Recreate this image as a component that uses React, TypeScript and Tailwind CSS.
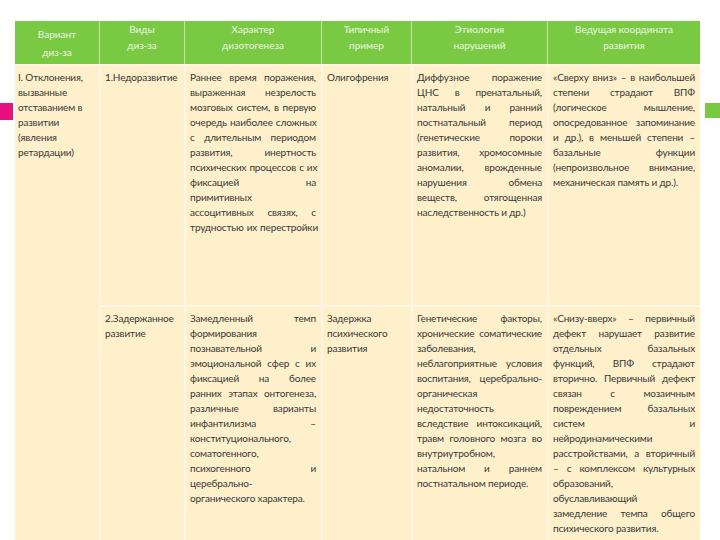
import React from 'react';

type Cell = { lines: string[]; left?: boolean };

// "<" at the start of a line = left aligned (last line of a justified paragraph)
const row1: Cell[] = [
  { lines: ['1.Недоразвитие'], left: true },
  {
    lines: [
      'Раннее время поражения,',
      'выраженная незрелость',
      'мозговых систем, в первую',
      'очередь наиболее сложных',
      'с длительным периодом',
      'развития, инертность',
      'психических процессов с их',
      'фиксацией на',
      'примитивных',
      'ассоцитивных связях, с',
      'трудностью их перестройки',
    ],
  },
  { lines: ['Олигофрения'], left: true },
  {
    lines: [
      'Диффузное поражение',
      'ЦНС в пренатальный,',
      'натальный и ранний',
      'постнатальный период',
      '(генетические пороки',
      'развития, хромосомные',
      'аномалии, врожденные',
      'нарушения обмена',
      'веществ, отягощенная',
      '<наследственность и др.)',
    ],
  },
  {
    lines: [
      '«Сверху вниз» – в наибольшей',
      'степени страдают ВПФ',
      '(логическое мышление,',
      'опосредованное запоминание',
      'и др.), в меньшей степени –',
      'базальные функции',
      '(непроизвольное внимание,',
      '<механическая память и др.).',
    ],
  },
];

const row2: Cell[] = [
  { lines: ['2.Задержанное', 'развитие'], left: true },
  {
    lines: [
      'Замедленный темп',
      'формирования',
      'познавательной и',
      'эмоциональной сфер с их',
      'фиксацией на более',
      'ранних этапах онтогенеза,',
      'различные варианты',
      'инфантилизма –',
      'конституционального,',
      'соматогенного,',
      'психогенного и',
      'церебрально-',
      '<органического характера.',
    ],
  },
  { lines: ['Задержка', 'психического', 'развития'], left: true },
  {
    lines: [
      'Генетические факторы,',
      'хронические соматические',
      'заболевания,',
      'неблагоприятные условия',
      'воспитания, церебрально-',
      'органическая',
      'недостаточность',
      'вследствие интоксикаций,',
      'травм головного мозга во',
      'внутриутробном,',
      'натальном и раннем',
      '<постнатальном периоде.',
    ],
  },
  {
    lines: [
      '«Снизу-вверх» – первичный',
      'дефект нарушает развитие',
      'отдельных базальных',
      'функций, ВПФ страдают',
      'вторично. Первичный дефект',
      'связан с мозаичным',
      'повреждением базальных',
      'систем и',
      'нейродинамическими',
      'расстройствами, а вторичный',
      '– с комплексом культурных',
      'образований,',
      'обуславливающий',
      'замедление темпа общего',
      '<психического развития.',
    ],
  },
];

const headers = [
  ['Виды', 'диз-за'],
  ['Характер', 'дизотогенеза'],
  ['Типичный', 'пример'],
  ['Этиология', 'нарушений'],
  ['Ведущая координата', 'развития'],
];

function Line({ t, left }: { t: string; left?: boolean }) {
  if (left || t.startsWith('<')) {
    return <div className="whitespace-nowrap">{t.replace(/^</, '')}</div>;
  }
  const words = t.split(' ');
  return (
    <div className="flex justify-between gap-[3px] whitespace-nowrap">
      {words.map((w, i) => (
        <span key={i}>{w}</span>
      ))}
    </div>
  );
}

function BodyCell({ cell }: { cell: Cell }) {
  return (
    <div className="border-l-2 border-t-2 border-[#fff7e4] pl-[4px] pr-[5px] pt-1">
      {cell.lines.map((l, i) => (
        <Line key={i} t={l} left={cell.left} />
      ))}
    </div>
  );
}

export default function App() {
  return (
    <div
      className="relative h-[540px] w-[720px] overflow-hidden bg-white text-[10px] leading-[15px] tracking-[-0.15px] text-[#383838]"
      style={{ fontFamily: 'Lato, "Liberation Sans", sans-serif' }}
    >
      {/* slide decorations */}
      <div className="absolute left-0 top-[103px] h-[17px] w-[13px] bg-[#e5127e]" />
      <div className="absolute right-0 top-[103px] h-[15px] w-[15px] bg-[#7ac943]" />

      <div className="ml-[15px] mt-[21px] w-[685px]">
        <div className="grid h-[43px] grid-cols-[84px_85px_137px_90px_136px_153px] bg-[#7ac943] text-center tracking-normal text-[#eef7e6]">
          <div className="pt-1 leading-[18px]">
            <div>Вариант</div>
            <div>диз-за</div>
          </div>
          {headers.map((h, i) => (
            <div key={i} className="border-l border-[#c3e4a4] leading-[16px]">
              <div>{h[0]}</div>
              <div>{h[1]}</div>
            </div>
          ))}
        </div>

        <div className="grid grid-cols-[84px_85px_137px_90px_136px_153px] grid-rows-[241px_260px] bg-[#fdf0cb]">
          <div className="row-span-2 border-t-2 border-[#fff7e4] pl-[3px] pt-1">
            {['I. Отклонения,', 'вызванные', 'отставанием в', 'развитии', '(явления', 'ретардации)'].map((l, i) => (
              <div key={i} className="whitespace-nowrap">
                {l}
              </div>
            ))}
          </div>
          {row1.map((c, i) => (
            <BodyCell key={'a' + i} cell={c} />
          ))}
          {row2.map((c, i) => (
            <BodyCell key={'b' + i} cell={c} />
          ))}
        </div>
      </div>
    </div>
  );
}
